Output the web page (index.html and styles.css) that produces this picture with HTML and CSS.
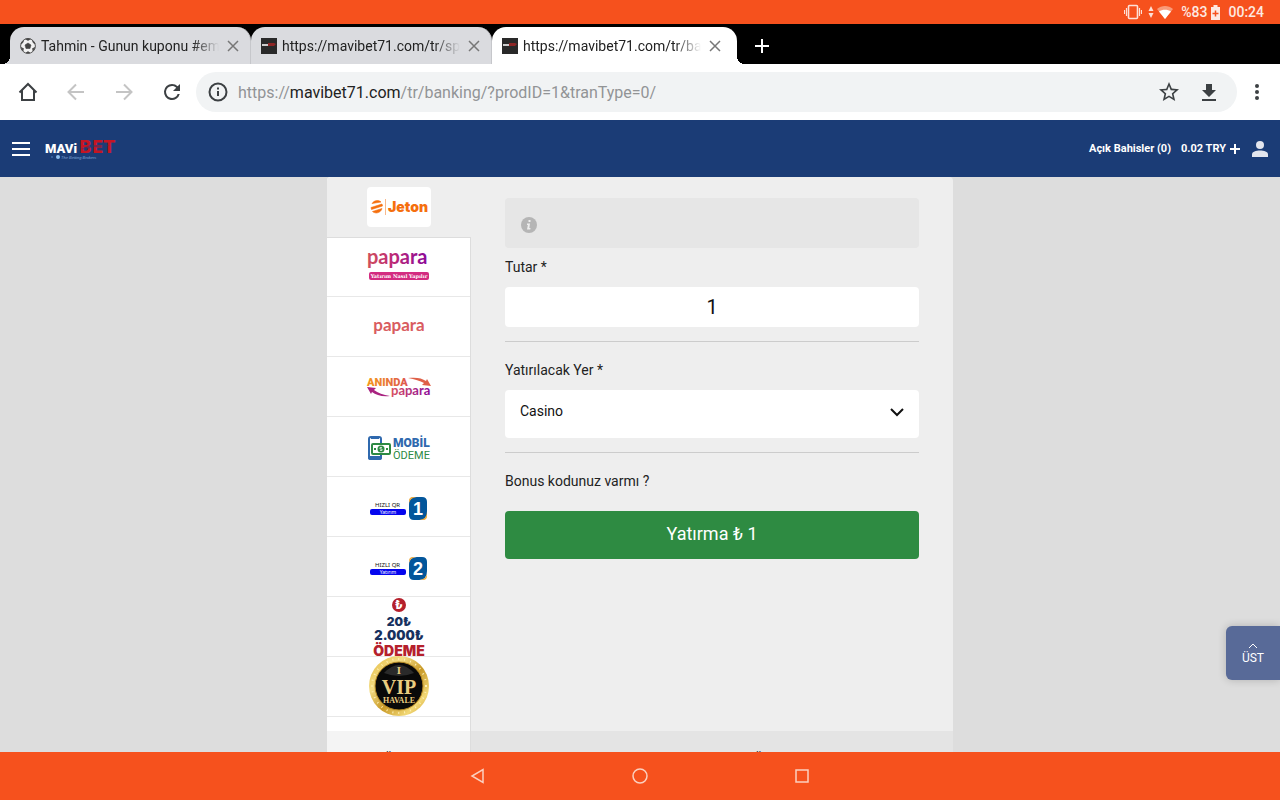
FILE: index.html
```html
<!DOCTYPE html>
<html lang="tr">
<head>
    <meta charset="utf-8">
    <meta name="viewport" content="width=device-width, initial-scale=1">
    <title>Mavibet - Para Yatırma</title>
    <link rel="stylesheet" href="styles.css">
</head>
<body>
    <div class="status-bar">
        <svg class="vibrate" width="18" height="16" viewBox="0 0 18 16" fill="none" stroke="#fde0d6"><rect x="4.5" y="1.5" width="9" height="13" rx="1" stroke-width="1.6"/><path d="M2.5 4v8M.5 6v4M15.500 4v8M17.500 6v4" stroke-width="1.2"/></svg>
        <svg class="arrows" width="6" height="12" viewBox="0 0 6 12" fill="#fde0d6"><path d="M3 0l2.500 5h-5zM3 12l2.500-5h-5z"/></svg>
        <svg class="wifi" width="16" height="13" viewBox="0 0 16 13"><path d="M8 13L0 3c4.500-4 11.500-4 16 0z" fill="#f99a79"/><path d="M8 13L2 5.500c3.500-2.500 8.500-2.500 12 0z" fill="#fff"/></svg>
        <span>%83</span>
        <svg class="battery" width="9" height="15" viewBox="0 0 9 15"><path d="M2.500 0h4v2H9v13H0V2h2.500z" fill="#fde9e2"/><path d="M4.500 5.500v6M1.500 8.500h6" stroke="#f6511d" stroke-width="1.500"/></svg>
        <span>00:24</span>
    </div>

    <div class="tabs">
        <div class="tab">
            <svg width="16" height="16" viewBox="0 0 16 16"><circle cx="8" cy="8" r="7.400" fill="#f2f2f2" stroke="#555" stroke-width="1"/><path d="M8 5l3 2-1 3.500H6L5 7zM5.500 1l2.500 1.500L10.500 1 8 .5zM1 6l2-1.500.5-2L1.500 5zM15 6l-2-1.500-.5-2 2 2.500zM3 13l.5-2.500L1 9.500zM13 13l-.5-2.500L15 9.500zM6 15l2-1.500 2 1.500z" fill="#444" stroke="#444" stroke-width=".6"/></svg>
            <span class="tab-title">Tahmin - Gunun kuponu #emre</span>
            <button class="tab-close" aria-label="Kapat"><svg width="12" height="12" viewBox="0 0 12 12"><path d="M1 1l10 10M11 1L1 11"/></svg></button>
        </div>
        <div class="tab">
            <svg width="16" height="16" viewBox="0 0 16 16"><path d="M0 0h16v16H0z" fill="#292929"/><path d="M1 6h6v2H1z" fill="#ccc"/><path d="M7 5h6l2 1-2 2H7z" fill="#8e2626"/></svg>
            <span class="tab-title">https://mavibet71.com/tr/sports</span>
            <button class="tab-close" aria-label="Kapat"><svg width="12" height="12" viewBox="0 0 12 12"><path d="M1 1l10 10M11 1L1 11"/></svg></button>
        </div>
        <div class="tab active">
            <svg width="16" height="16" viewBox="0 0 16 16"><path d="M0 0h16v16H0z" fill="#292929"/><path d="M1 6h6v2H1z" fill="#ccc"/><path d="M7 5h6l2 1-2 2H7z" fill="#8e2626"/></svg>
            <span class="tab-title">https://mavibet71.com/tr/banking</span>
            <button class="tab-close" aria-label="Kapat"><svg width="12" height="12" viewBox="0 0 12 12"><path d="M1 1l10 10M11 1L1 11"/></svg></button>
        </div>
        <button class="new-tab" aria-label="Yeni sekme"><svg width="14" height="14" viewBox="0 0 14 14"><path d="M7 0v14M0 7h14" stroke="#fff" stroke-width="2"/></svg></button>
    </div>

    <div class="toolbar">
        <button aria-label="Ana sayfa"><svg width="24" height="24" viewBox="0 0 24 24" fill="none" stroke="#3c4043" stroke-width="2"><path d="M3.500 12.500L12 4l8.500 8.500M6 10.500V20h12v-9.500"/></svg></button>
        <button aria-label="Geri"><svg width="24" height="24" viewBox="0 0 24 24" fill="none" stroke="#c4c4c4" stroke-width="2"><path d="M20 12H5M12 4.500L4.500 12l7.500 7.500"/></svg></button>
        <button aria-label="İleri"><svg width="24" height="24" viewBox="0 0 24 24" fill="none" stroke="#c4c4c4" stroke-width="2"><path d="M4 12h15M12 4.500l7.500 7.500-7.500 7.500"/></svg></button>
        <button aria-label="Yenile"><svg width="24" height="24" viewBox="0 0 24 24" fill="#3c4043"><path d="M17.650 6.350A7.960 7.960 0 0 0 12 4a8 8 0 1 0 7.730 10h-2.080A6 6 0 1 1 12 6c1.660 0 3.140.69 4.220 1.780L13 11h7V4z"/></svg></button>
        <div class="address">
            <svg width="24" height="24" viewBox="0 0 24 24"><circle cx="12" cy="12" r="8.500" fill="none" stroke="#3c4043" stroke-width="2"/><path d="M11 11h2v5h-2zM11 7.500h2v2h-2z" fill="#3c4043"/></svg>
            <span class="url">https://<b>mavibet71.com</b>/tr/banking/?prodID=1&amp;tranType=0/</span>
            <button aria-label="Yer işareti"><svg width="24" height="24" viewBox="0 0 24 24" fill="#3c4043"><path d="M22 9.240l-7.190-.62L12 2 9.190 8.630 2 9.240l5.460 4.730L5.820 21 12 17.270 18.180 21l-1.630-7.030L22 9.240zM12 15.400l-3.760 2.270 1-4.280-3.320-2.880 4.380-.38L12 6.100l1.710 4.040 4.380.38-3.320 2.880 1 4.280L12 15.400z"/></svg></button>
            <button aria-label="İndir"><svg width="24" height="24" viewBox="0 0 24 24" fill="#3c4043"><path d="M19 10h-4V4H9v6H5l7 7zM5 19v2h14v-2z"/></svg></button>
        </div>
        <button class="more" aria-label="Menü"><svg width="24" height="24" viewBox="0 0 24 24" fill="#3c4043"><circle cx="12" cy="6" r="2"/><circle cx="12" cy="12" r="2"/><circle cx="12" cy="18" r="2"/></svg></button>
    </div>

    <div class="page">
        <header class="site-header">
            <button aria-label="Menü"><svg width="18" height="14" viewBox="0 0 18 14" fill="#fff"><path d="M0 0h18v2H0zM0 6h18v2H0zM0 12h18v2H0z"/></svg></button>
            <a href="#" class="logo" aria-label="Mavibet">
                <svg width="76" height="24" viewBox="0 0 76 24">
                    <text x="0" y="16" class="logo-mavi">MAVi</text>
                    <text x="34" y="16" class="logo-bet">BET</text>
                    <path d="M36 12l9-4h20l-6 2h-12l-6 3z" fill="#1c3c76" opacity=".45"/>
                    <circle cx="13" cy="20" r="2" fill="#8fc0ef"/>
                    <circle cx="7" cy="20" r="1" fill="#3e6aa8"/>
                    <text x="16" y="22" class="logo-sub">The Betting Brokers</text>
                </svg>
            </a>
            <div class="account">
                <a href="#">Açık Bahisler (0)</a>
                <a href="#" class="balance">0.02 TRY <svg width="10" height="10" viewBox="0 0 10 10"><path d="M5 0v10M0 5h10" stroke="#fff" stroke-width="2"/></svg></a>
                <a href="#" class="profile" aria-label="Hesabım"><svg width="16" height="16" viewBox="0 0 16 16" fill="#e3e6ee"><circle cx="8" cy="4" r="4"/><path d="M0 16v-2.500C0 10.500 4 9.500 8 9.500s8 1 8 4V16z"/></svg></a>
            </div>
        </header>

        <div class="cashier">
            <div class="methods">
                <a href="#" class="method selected" aria-label="Jeton">
                    <svg width="64" height="40" viewBox="0 0 64 40">
                        <rect width="64" height="40" rx="4" fill="#fff"/>
                        <path d="M5 16.500c2-3 6-4 9-1.500zM4 20.500l11-3.500 .5 2L4.500 22.500zM5.500 24.500l9.500-3c-1 4-6 6-9.500 3z" fill="#f56f0e" stroke="#f56f0e" stroke-width=".6"/>
                        <path d="M18.500 12v16" stroke="#f8b98c"/>
                        <text x="21" y="25" class="jeton">Jeton</text>
                    </svg>
                </a>
                <a href="#" class="method" aria-label="Papara nasıl yapılır">
                    <svg width="64" height="58" viewBox="0 0 64 58">
                        <defs><linearGradient id="pink"><stop offset="0" stop-color="#d0505c"/><stop offset=".45" stop-color="#bb2878"/><stop offset="1" stop-color="#8b0a99"/></linearGradient></defs>
                        <text x="0" y="26" class="papara-big" fill="url(#pink)">papara</text>
                        <rect x="2" y="34" width="60" height="8" rx="2" fill="#d32c80"/>
                        <text x="32" y="40" class="papara-sub">Yatırım Nasıl Yapılır</text>
                    </svg>
                </a>
                <a href="#" class="method" aria-label="Papara">
                    <svg width="64" height="58" viewBox="0 0 64 58">
                        <text x="32" y="33" class="papara-small">papara</text>
                    </svg>
                </a>
                <a href="#" class="method" aria-label="Anında Papara">
                    <svg width="64" height="58" viewBox="0 0 64 58">
                        <defs>
                            <linearGradient id="sun"><stop offset="0" stop-color="#f59a1b"/><stop offset="1" stop-color="#dd5550"/></linearGradient>
                            <linearGradient id="dusk"><stop offset="0" stop-color="#d95060"/><stop offset="1" stop-color="#8b0a99"/></linearGradient>
                        </defs>
                        <text x="0" y="28" class="aninda" fill="url(#sun)">ANINDA</text>
                        <text x="24" y="37" class="aninda-papara" fill="url(#dusk)">papara</text>
                        <path d="M41 20c8-1 14 0 18 3l1-2 4 7-9-1 2-2c-4-2-9-4-16-5z" fill="#df6048"/>
                        <path d="M23 38c-8 1-14-1-18-4l-1 2-4-7 9 1-2 2c4 3 9 5 16 6z" fill="#a92380"/>
                    </svg>
                </a>
                <a href="#" class="method" aria-label="Mobil Ödeme">
                    <svg width="64" height="58" viewBox="0 0 64 58">
                        <rect x="2" y="19" width="12" height="22" rx="2" fill="#fff" stroke="#2f69ae" stroke-width="2"/>
                        <path d="M1 38h14v2c0 1-1 2-2 2H3c-1 0-2-1-2-2zM4 19h8v2H4z" fill="#2f69ae"/>
                        <rect x="5" y="26" width="18" height="10" rx="1" fill="#fff" stroke="#2d8a43" stroke-width="2"/>
                        <circle cx="14" cy="31" r="3.500" fill="#2d8a43"/>
                        <path d="M15 29.500h-2v1.500h2v1.500h-2" fill="none" stroke="#fff" stroke-width=".7"/>
                        <path d="M7 30h2v2H7zM19 30h2v2h-2z" fill="#2d8a43"/>
                        <text x="26" y="29" class="mobil">MOBİL</text>
                        <text x="26" y="41" class="odeme">ÖDEME</text>
                    </svg>
                </a>
                <a href="#" class="method" aria-label="Hızlı QR Yatırım 1">
                    <svg width="64" height="58" viewBox="0 0 64 58">
                        <text x="8" y="29" class="qr">HIZLI QR</text>
                        <rect x="3" y="31" width="36" height="6" rx="2" fill="#0505ee"/>
                        <text x="21" y="36" class="qr-sub">Yatırım</text>
                        <path d="M42 24q0-5 5-5h7l6 12v6q0 5-5 5h-4z" fill="#eead45"/>
                        <path d="M42 27q0-8 8-8h5q5 0 5 5v9q0 9-8 9h-5q-5 0-5-5z" fill="#03569b"/>
                        <path d="M42 25v-2q0-4 4-4h3q-6 1-7 6zM60 36v2q0 4-4 4h-3q6-1 7-6z" fill="#eead45"/>
                        <text x="51" y="37" class="qr-number">1</text>
                    </svg>
                </a>
                <a href="#" class="method" aria-label="Hızlı QR Yatırım 2">
                    <svg width="64" height="58" viewBox="0 0 64 58">
                        <text x="8" y="29" class="qr">HIZLI QR</text>
                        <rect x="3" y="31" width="36" height="6" rx="2" fill="#0505ee"/>
                        <text x="21" y="36" class="qr-sub">Yatırım</text>
                        <path d="M42 27q0-8 8-8h5q5 0 5 5v9q0 9-8 9h-5q-5 0-5-5z" fill="#03569b"/>
                        <path d="M42 25v-2q0-4 4-4h3q-6 1-7 6zM60 36v2q0 4-4 4h-3q6-1 7-6z" fill="#eead45"/>
                        <text x="51" y="37" class="qr-number">2</text>
                    </svg>
                </a>
                <a href="#" class="method" aria-label="20₺ - 2.000₺ Ödeme">
                    <svg width="64" height="59" viewBox="0 0 64 59">
                        <circle cx="32" cy="8" r="7" fill="#b5202c"/>
                        <text x="32" y="12" class="coin">₺</text>
                        <text x="32" y="29" class="limit-min">20₺</text>
                        <text x="32" y="43" class="limit-max">2.000₺</text>
                        <text x="32" y="59" class="limit-word">ÖDEME</text>
                    </svg>
                </a>
                <a href="#" class="method" aria-label="VIP Havale">
                    <svg width="64" height="59" viewBox="0 0 64 59">
                        <defs><linearGradient id="gold" x2="1" y2="1"><stop offset="0" stop-color="#e4b93d"/><stop offset=".3" stop-color="#f3dc84"/><stop offset=".55" stop-color="#c99a28"/><stop offset=".8" stop-color="#f2d875"/><stop offset="1" stop-color="#c8962a"/></linearGradient></defs>
                        <circle cx="32" cy="29" r="30" fill="url(#gold)"/>
                        <circle cx="32" cy="29" r="27" fill="none" stroke="#fff0b5" stroke-width="2" stroke-dasharray="1 5"/>
                        <circle cx="32" cy="29" r="24" fill="#090909" stroke="#b98c25"/>
                        <path d="M17 16q15-16 30 0-15 6-30 0z" fill="#2a2a2a"/>
                        <text x="32" y="17" class="vip-small">I</text>
                        <text x="32" y="37" class="vip">VIP</text>
                        <text x="32" y="46" class="havale">HAVALE</text>
                    </svg>
                </a>
                <div class="panel-footer">Son Ödemeler</div>
            </div>

            <div class="deposit">
                <form class="deposit-form">
                    <div class="info">
                        <svg width="16" height="16" viewBox="0 0 16 16"><circle cx="8" cy="8" r="8" fill="#b5b5b5"/><path d="M7.500 3h2v2h-2zM6 6.500h3L8.300 11h1.200l-.2 1.500H6L6.900 8H6z" fill="#eee"/></svg>
                    </div>
                    <label class="first" for="amount">Tutar *</label>
                    <input type="text" id="amount" value="1">
                    <div class="field">
                        <label for="wallet">Yatırılacak Yer *</label>
                        <div class="select">
                            <select id="wallet">
                                <option>Casino</option>
                                <option>Spor</option>
                            </select>
                            <svg width="14" height="9" viewBox="0 0 14 9"><path d="M1 1l6 6 6-6" fill="none" stroke="#111" stroke-width="2"/></svg>
                        </div>
                    </div>
                    <div class="field">
                        <p class="bonus">Bonus kodunuz varmı ?</p>
                        <button type="button" class="submit">Yatırma ₺ 1</button>
                    </div>
                </form>
                <div class="panel-footer">Güncel hesap bakiyesi ve Ödemeler</div>
            </div>
        </div>

        <a href="#" class="to-top"><svg width="10" height="6" viewBox="0 0 10 6"><path d="M1 5l4-4 4 4" fill="none" stroke="#fff"/></svg>ÜST</a>
    </div>

    <nav class="system-nav">
        <button aria-label="Geri"><svg width="24" height="24" viewBox="0 0 24 24"><path d="M17 5.500v13L6 12z"/></svg></button>
        <button aria-label="Ana ekran"><svg width="24" height="24" viewBox="0 0 24 24"><circle cx="12" cy="12" r="7"/></svg></button>
        <button aria-label="Son uygulamalar"><svg width="24" height="24" viewBox="0 0 24 24"><rect x="6" y="6" width="12" height="12"/></svg></button>
    </nav>
</body>
</html>
```
FILE: styles.css
```css
* {
    box-sizing: border-box;
}
body {
    margin: 0;
    height: 100vh;
    display: flex;
    flex-direction: column;
    overflow: hidden;
    font-family: Roboto, "Noto Sans", sans-serif;
    font-size: 14px;
    color: #222;
}
button {
    border: none;
    background: none;
    padding: 0;
    font-family: inherit;
    cursor: pointer;
}
a {
    color: inherit;
    text-decoration: none;
}
svg {
    display: block;
    flex-shrink: 0;
}

/* android status bar */
.status-bar {
    height: 24px;
    flex-shrink: 0;
    display: flex;
    align-items: center;
    justify-content: flex-end;
    padding-right: 16px;
    background: #f6511d;
    color: #fde9e2;
    font-weight: 500;
}
.status-bar .arrows {
    margin: 0 3px 0 6px;
}
.status-bar .wifi {
    margin-right: 8px;
}
.status-bar .battery {
    margin: 0 8px 0 4px;
}

/* browser */
.tabs {
    height: 40px;
    flex-shrink: 0;
    display: flex;
    align-items: flex-end;
    padding-left: 10px;
    background: #000;
}
.tab {
    position: relative;
    width: 241px;
    height: 37px;
    display: flex;
    align-items: center;
    padding: 0 11px 0 10px;
    background: #dadbdf;
    border-right: 1px solid #c6c7cb;
    border-radius: 14px 14px 0 0;
}
.tab.active {
    width: 245px;
    padding-right: 16px;
    background: #fff;
    border: none;
}
.tab:first-child::before,
.tab.active::after {
    content: "";
    position: absolute;
    bottom: 0;
    width: 8px;
    height: 8px;
}
.tab:first-child::before {
    left: -8px;
    background: radial-gradient(circle at 0 0, transparent 8px, #dadbdf 8px);
}
.tab.active::after {
    right: -8px;
    background: radial-gradient(circle at 100% 0, transparent 8px, #fff 8px);
}
.tab-title {
    flex: 1;
    margin: 0 8px 0 5px;
    overflow: hidden;
    white-space: nowrap;
    line-height: 20px;
    -webkit-mask-image: linear-gradient(to right, #000 85%, transparent);
    mask-image: linear-gradient(to right, #000 85%, transparent);
}
.tab-close path {
    stroke: #777;
    stroke-width: 1.5;
}
.new-tab {
    align-self: center;
    margin-left: 18px;
    padding-top: 4px;
}
.toolbar {
    height: 56px;
    flex-shrink: 0;
    display: flex;
    align-items: center;
    gap: 24px;
    padding: 0 11px 0 16px;
    background: #fff;
}
.address {
    flex: 1;
    height: 40px;
    display: flex;
    align-items: center;
    gap: 16px;
    margin-left: -12px;
    padding: 0 16px 0 10px;
    background: #f1f3f4;
    border-radius: 20px;
}
.url {
    flex: 1;
    margin-left: -8px;
    font-size: 16px;
    color: #929496;
}
.url b {
    font-weight: 400;
    color: #222;
}
.toolbar .more {
    margin-left: -16px;
}

/* site */
.page {
    position: relative;
    flex: 1;
    min-height: 0;
    overflow: hidden;
    display: flex;
    flex-direction: column;
    background: #ddd;
}
.site-header {
    height: 57px;
    flex-shrink: 0;
    display: flex;
    align-items: center;
    padding: 0 12px;
    background: #1b3c76;
}
.logo {
    margin-left: 15px;
}
.logo-mavi {
    font: 900 13px Roboto, sans-serif;
    fill: #fff;
}
.logo-bet {
    font: bold 17px "DejaVu Sans", sans-serif;
    fill: #c51523;
}
.logo-sub {
    font: italic 4px "Liberation Sans", sans-serif;
    fill: #7fa6d8;
}
.account {
    display: flex;
    align-items: center;
    gap: 10px;
    margin-left: auto;
    color: #fff;
    font-size: 11px;
    font-weight: bold;
}
.balance {
    display: flex;
    align-items: center;
    gap: 4px;
}
.profile {
    margin-left: 2px;
}

.cashier {
    flex: 1;
    min-height: 0;
    width: 626px;
    max-width: 100%;
    margin: 0 auto;
    display: flex;
    background: #eee;
    border-radius: 4px 4px 0 0;
}
.methods {
    width: 144px;
    flex-shrink: 0;
    display: flex;
    flex-direction: column;
    background: #fff;
    border-right: 1px solid #ddd;
    border-radius: 4px 0 0 0;
}
.method {
    height: 60px;
    flex-shrink: 0;
    display: flex;
    align-items: center;
    justify-content: center;
    border-bottom: 1px solid #e8e8e8;
}
.method svg {
    overflow: visible;
}
.method.selected {
    height: 61px;
    margin-right: -1px;
    background: #eee;
    border-bottom-color: #ddd;
    border-radius: 4px 0 0 0;
}
.method.selected + .method {
    height: 59px;
}
.method text {
    font-family: Roboto, sans-serif;
}
.method .jeton {
    font: 900 14px Inter, sans-serif;
    fill: #f56f0e;
}
.method .papara-big {
    font: bold 20px Lato, sans-serif;
}
.method .papara-sub {
    font: bold 5px "DejaVu Serif", serif;
    fill: #fff;
    text-anchor: middle;
}
.method .papara-small {
    font: bold 17px Lato, sans-serif;
    fill: #d95c60;
    text-anchor: middle;
}
.method .aninda {
    font: 900 11px Roboto, sans-serif;
}
.method .aninda-papara {
    font: bold 13px Lato, sans-serif;
}
.method .mobil {
    font: 900 12px Roboto, sans-serif;
    fill: #2f69ae;
}
.method .odeme {
    font: 11px Roboto, sans-serif;
    fill: #2d8a43;
}
.method .qr {
    font: 6px "Noto Sans", sans-serif;
    fill: #111;
}
.method .qr-sub {
    font: 5px "Noto Sans", sans-serif;
    fill: #fff;
    text-anchor: middle;
}
.method .qr-number {
    font: bold 18px "Liberation Sans", sans-serif;
    fill: #fff;
    text-anchor: middle;
}
.method .coin {
    font-size: 12px;
    font-weight: 900;
    fill: #fff;
    text-anchor: middle;
}
.method .limit-min,
.method .limit-max,
.method .limit-word {
    font: 900 12px Inter, sans-serif;
    fill: #17315f;
    text-anchor: middle;
}
.method .limit-max {
    font-size: 13px;
}
.method .limit-word {
    font-size: 14px;
    fill: #b5202c;
}
.method .vip,
.method .vip-small,
.method .havale {
    font: bold 20px "Liberation Serif", serif;
    fill: #e9cd80;
    text-anchor: middle;
}
.method .vip-small {
    font-size: 11px;
}
.method .havale {
    font-size: 8px;
}

.deposit {
    flex: 1;
    display: flex;
    flex-direction: column;
}
.deposit-form {
    flex: 1;
    padding: 21px 34px 0;
}
.info {
    height: 50px;
    padding: 19px 16px;
    background: #e6e6e6;
    border-radius: 4px;
}
label,
.bonus {
    display: block;
    margin: 0;
    line-height: 40px;
}
label.first {
    line-height: 39px;
}
#amount {
    display: block;
    width: 100%;
    height: 40px;
    border: none;
    border-radius: 4px;
    text-align: center;
    font-family: inherit;
    font-size: 20px;
    color: #111;
}
.field {
    margin-top: 14px;
    padding-top: 8px;
    border-top: 1px solid #ccc;
}
.select {
    position: relative;
}
.select select {
    display: block;
    width: 100%;
    height: 48px;
    padding: 0 15px 6px;
    border: none;
    border-radius: 4px;
    appearance: none;
    background: #fff;
    font-family: inherit;
    font-size: 14px;
    color: #111;
}
.select svg {
    position: absolute;
    right: 15px;
    top: 18px;
}
.submit {
    display: block;
    width: 100%;
    height: 48px;
    margin-top: 10px;
    padding-bottom: 3px;
    background: #2e8b42;
    border-radius: 4px;
    color: #fff;
    font-size: 18px;
}
.panel-footer {
    height: 21px;
    margin-top: auto;
    flex-shrink: 0;
    overflow: hidden;
    padding-top: 16px;
    background: #e4e4e4;
    font-size: 12px;
    line-height: 22px;
    text-align: center;
}
.methods .panel-footer {
    background: #f4f4f4;
}
.to-top {
    position: absolute;
    right: 0;
    bottom: 72px;
    width: 54px;
    height: 54px;
    display: flex;
    flex-direction: column;
    align-items: center;
    justify-content: center;
    gap: 2px;
    padding-top: 2px;
    background: #586a98;
    border-radius: 6px 0 0 6px;
    box-shadow: 0 0 8px rgba(0,0,0,0.2);
    color: #fff;
    font-size: 12px;
}

.system-nav {
    height: 48px;
    flex-shrink: 0;
    display: flex;
    align-items: center;
    justify-content: center;
    gap: 138px;
    background: #f6511d;
}
.system-nav svg {
    fill: none;
    stroke: #fbd0c0;
    stroke-width: 1.5;
}
```
